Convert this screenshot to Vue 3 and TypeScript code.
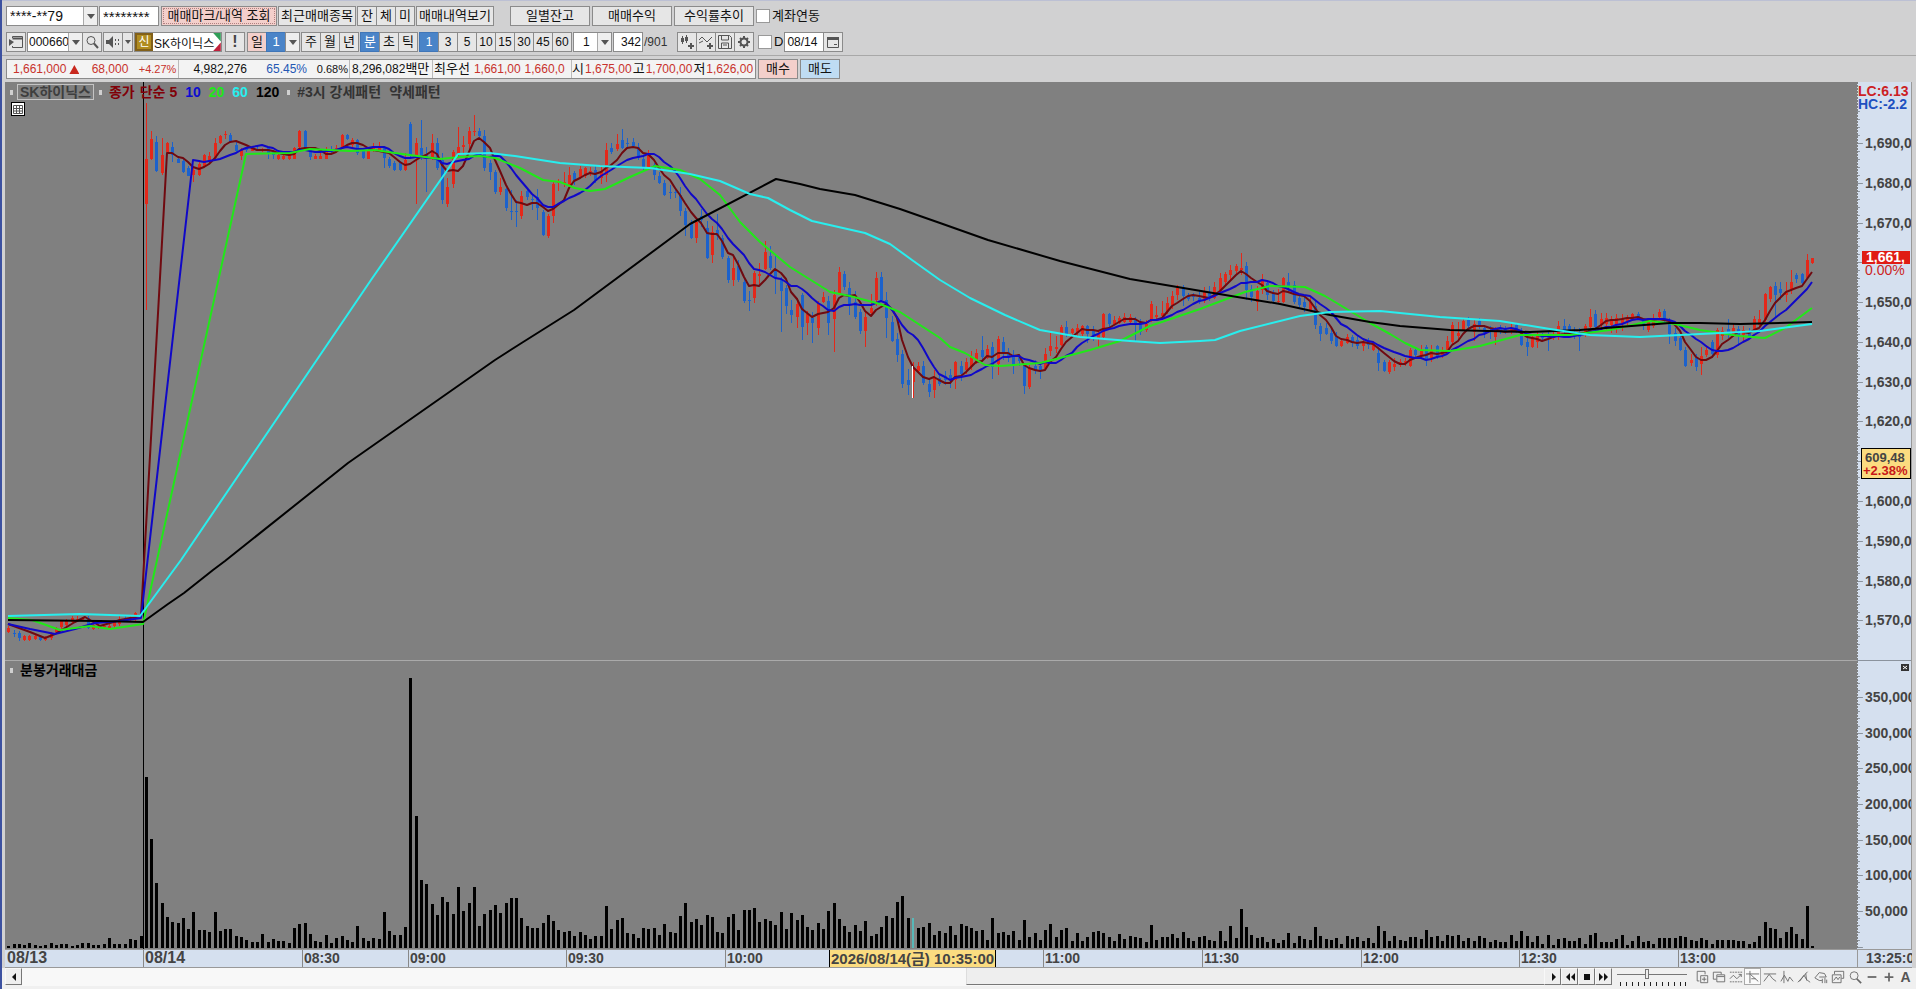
<script setup lang="ts">
import { computed, ref } from 'vue'

type Point = [number, number]
interface Candle {
  up: boolean
  high: number
  top: number
  bottom: number
  low: number
}

// Plot space shared by both panes
const LEFT = 5
const TOP = 82
const WIDTH = 1852
const HEIGHT = 867
const BASE = 948
const FIRST_BAR = 8.3
const BAR_STEP = 5.29
const OPEN_INDEX = 26
const CURSOR_INDEX = 171

const barX = (index: number): number => Math.round(FIRST_BAR + BAR_STEP * index)

// direction, high, body top, body bottom, low
const candleSource = `
r626,628,632,633 b630,633,634,637 b631,633,638,641 r635,636,640,641 r635,636,640,641 r634,636,639,640 b635,637,640,641 r636,638,640,641 r632,634,638,640 r627,629,632,634
r620,621,627,630 r619,620,625,627 r616,618,622,623 r616,619,620,622 r617,618,620,621 b616,618,628,629 r624,625,629,630 r624,626,628,629 r624,626,627,628 r623,626,628,629
r620,622,626,628 r616,619,624,626 b616,618,620,621 r616,617,620,621 r612,613,619,621 r607,612,614,616
r103,159,204,310 r131,139,159,160 b136,142,171,172 r138,155,173,175
r142,143,152,153 b142,147,155,162 b157,159,163,163 b158,161,172,173 b166,168,176,176 r166,170,175,182 r160,164,175,176 r154,155,167,168 r152,156,162,163 r138,143,158,159
r135,136,143,144 r131,134,135,139 b133,135,142,143 b142,145,151,152 r148,150,156,160 b147,148,150,152 r147,149,151,151 b146,149,150,151 r148,149,151,152 b147,148,154,159
b150,152,155,159 r151,155,159,160 r152,156,159,160 r152,155,159,160 r147,148,159,159 r130,131,147,148 b130,131,149,150 b149,150,157,160 r154,156,159,159 r153,156,159,159
r147,150,159,159 b146,150,152,153 r145,148,152,153 r134,135,147,148 b134,135,139,140 r138,140,145,147 b139,140,153,155 b149,151,158,159 r147,150,159,159 r143,147,151,152
r142,146,150,151 b147,148,158,168 b157,159,166,168 b161,163,170,171 b161,163,170,171 r153,160,170,171 b122,124,156,159 r138,143,158,204 b120,148,158,160 b147,155,157,192
r134,143,158,160 b138,143,168,170 b153,160,200,204 r178,187,204,207 r150,152,184,188 r127,147,155,158 r136,145,147,153 r127,131,144,150 r115,131,132,136 b128,131,136,137
b130,136,168,171 b160,163,172,180 b170,172,192,194 r178,187,192,195 b188,189,208,211 b190,211,212,220 b200,211,212,227 r191,196,216,219 b189,191,197,200 b194,199,200,210
b189,197,208,220 b210,212,235,236 r214,216,236,238 r182,184,216,223 r179,182,183,191 r172,182,183,187 r167,175,185,189 b171,173,180,185 r166,169,178,179 r167,168,176,178
r167,171,172,176 b166,170,180,183 r167,172,178,184 r143,150,175,182 b143,148,152,154 r134,144,149,151 b129,140,148,149 b138,143,144,148 b138,142,146,148 b143,147,158,160
b156,159,167,172 r150,155,167,168 b163,165,175,180 b172,176,183,184 b180,183,195,196 b185,192,193,199 b187,192,193,198 b187,195,211,216 b208,211,225,236 b220,224,238,239
r217,222,238,243 b209,216,220,227 b221,228,258,259 r226,232,255,263 b214,230,236,240 b235,238,257,259 b256,258,280,283 r255,268,280,286 b260,266,280,282 b278,282,301,303
b291,300,301,311 r271,273,298,303 r263,274,276,284 r241,252,269,270 b246,256,268,270 b254,270,278,294 b277,280,291,332 b285,288,306,314 b300,310,315,323 r298,304,317,328
b293,295,327,340 r311,314,323,335 b312,318,323,343 r301,303,328,335 r292,297,302,303 b296,301,323,335 r290,295,319,352 r267,272,294,295 b271,274,287,290 b282,288,305,315
b291,302,317,319 b309,312,331,334 r312,317,331,347 r294,308,313,314 r272,278,300,306 b272,277,300,302 b292,300,318,338 b316,322,341,342 b333,339,355,362 b350,354,384,388
b369,380,385,395 r362,368,382,398 r362,366,371,372 b361,366,383,385 b379,384,392,397 r370,377,390,398 b375,378,384,386 b371,376,380,385 b369,375,380,388 r361,362,380,389
b361,366,374,381 r358,362,370,374 r351,357,367,370 r349,353,362,364 b336,350,357,360 r345,349,358,359 b342,347,367,379 r336,339,364,375 b337,342,352,360 b348,352,358,362
b350,357,366,374 b354,357,361,366 b363,366,386,394 r365,368,387,389 b360,366,370,374 b362,366,370,379 r348,354,369,370 r333,346,351,356 r336,347,349,353 r325,327,345,346
b321,327,335,337 r328,329,333,335 r324,328,333,336 r325,326,334,336 b325,326,334,343 b326,330,335,341 r331,334,338,347 r313,314,337,338 b313,314,324,329 r316,320,324,325
r316,318,323,324 r313,317,322,323 r314,317,322,324 b317,320,325,341 b319,322,332,335 r320,324,330,332 r301,304,321,322 r306,315,317,319 r301,313,316,318 r297,303,312,314
r291,296,305,309 r285,288,295,300 b285,287,296,306 b293,296,299,301 b293,295,297,301 b291,298,302,304 r287,292,301,303 b286,293,298,301 r282,287,298,299 r273,278,291,292
r272,274,282,285 r265,270,275,280 r264,266,271,275 r253,268,270,275 b262,266,290,300 b285,289,297,302 r286,291,302,311 r274,281,290,294 b280,283,295,300 b290,293,301,304
r289,301,302,304 r277,278,302,303 b273,282,287,291 b281,285,302,304 b295,298,305,309 b297,302,307,312 r296,302,310,312 b301,306,325,329 b323,326,334,341 b323,328,334,335
b327,333,341,344 b332,337,346,347 r339,341,346,347 r334,337,343,344 b335,337,343,347 b335,340,346,349 r339,342,346,351 b338,341,345,349 r341,345,350,351 b347,353,363,371
b360,362,371,372 r360,362,372,374 r358,364,367,371 r359,362,365,367 r358,361,363,366 r348,350,366,367 b348,350,355,359 r345,350,355,358 b345,347,360,366 r345,350,358,362
b345,346,357,359 r347,350,355,358 r336,341,352,354 r322,325,342,345 r322,333,336,341 r319,321,330,331 b317,320,326,328 r320,324,332,341 b318,321,327,329 b325,328,333,338
b326,330,332,339 r327,330,337,345 b325,329,331,334 b326,329,332,334 r324,328,331,334 b324,325,331,333 b328,331,345,346 b335,342,347,356 r335,337,347,348 r332,336,342,348
b333,336,338,341 b332,336,338,351 r332,335,338,340 r321,326,334,340 b319,326,332,334 b324,326,335,337 b327,333,336,339 b328,333,337,351 r324,326,335,337 r309,317,327,328
b310,314,327,329 r313,319,325,330 r313,318,324,331 r316,320,325,333 r314,318,325,333 r314,318,324,331 r315,318,321,325 r313,314,319,321 b312,314,319,320 b318,321,326,330
r319,322,330,332 r314,318,326,328 r309,312,317,320 b309,311,320,322 b318,320,334,344 b328,333,341,346 b336,338,350,351 b347,350,366,367 r354,360,363,366 b354,358,367,371
r347,356,364,375 r345,350,355,357 b340,342,354,358 r328,330,355,358 r327,331,336,340 b319,329,335,338 r323,328,335,337 b326,329,336,346 r326,330,335,341 b328,332,336,339
r316,319,331,332 r310,319,325,327 r293,294,320,322 r286,287,299,302 b282,286,295,318 b282,289,293,300 r282,293,295,302 r270,282,289,294 b273,275,279,283 b273,274,283,285
r254,260,278,279 r258,258,263,264`

const candles: Candle[] = candleSource.trim().split(/\s+/).map((item) => {
  const [high, top, bottom, low] = item.slice(1).split(',').map(Number)
  return { up: item[0] === 'r', high, top, bottom, low }
})

const volumes: number[] = [
  2, 4, 4, 3, 5, 3, 2, 3, 5, 3, 4, 4, 2, 3, 5, 5, 3, 3, 4, 10, 4, 4, 4, 9, 8, 12,
  171, 109, 65, 45, 31, 26, 25, 30, 19, 36, 18, 18, 16, 36, 17, 19, 19, 12, 11, 8, 6, 6, 14, 6, 9, 7, 7, 5, 20, 24,
  25, 14, 7, 6, 13, 5, 10, 12, 8, 6, 22, 10, 7, 10, 9, 36, 17, 13, 13, 21,
  270, 132, 68, 64, 44, 33, 51, 46, 34, 61, 37, 45, 61, 22, 34, 38, 43, 35, 45, 50, 50, 30, 22, 20, 20, 25, 33, 27, 18, 16,
  17, 12, 16, 13, 9, 12, 12, 42, 19, 28, 30, 15, 14, 10, 20, 19, 20, 13, 24, 16, 15, 32, 45, 26, 29, 23, 33, 31, 16, 15,
  31, 34, 18, 38, 38, 40, 26, 29, 27, 23, 36, 19, 35, 28, 33, 21, 18, 25, 19, 37, 45, 29, 22, 16, 23, 17, 27, 12, 14, 21,
  32, 30, 46, 52, 30, 30, 20, 21, 25, 13, 17, 15, 22, 13, 24, 22, 20, 17, 18, 8, 30, 15, 16, 13, 17, 8, 28, 11, 15, 8,
  18, 24, 11, 18, 20, 7, 15, 7, 11, 16, 17, 15, 11, 7, 14, 9, 12, 11, 10, 6, 23, 8, 11, 11, 14, 10, 16, 10, 7, 11,
  12, 8, 7, 17, 7, 22, 10, 39, 21, 13, 10, 11, 6, 9, 5, 8, 15, 5, 12, 9, 8, 21, 12, 9, 8, 10, 4, 12, 9, 11,
  7, 10, 5, 22, 17, 7, 12, 8, 7, 11, 11, 9, 18, 11, 12, 7, 13, 12, 13, 7, 10, 7, 12, 10, 6, 8, 6, 6, 13, 7,
  17, 12, 6, 12, 4, 13, 3, 9, 10, 7, 7, 10, 4, 13, 15, 6, 6, 6, 9, 13, 3, 7, 12, 6, 7, 4, 10, 10, 10, 10,
  12, 11, 8, 7, 10, 8, 4, 8, 8, 8, 8, 7, 7, 4, 6, 12, 26, 20, 19, 10, 16, 21, 14, 9, 42, 2,
]

const closeOf = (c: Candle): number => (c.up ? c.top : c.bottom)

// Average of the closes, starting once the session holds a full window
function average(period: number): Point[] {
  const points: Point[] = []
  for (let i = OPEN_INDEX + period - 1; i < candles.length; i++) {
    let sum = 0
    for (let j = i - period + 1; j <= i; j++) sum += closeOf(candles[j])
    points.push([barX(i), Math.round(sum / period)])
  }
  return points
}

const toLine = (points: Point[]): string => points.map((p) => p.join(',')).join(' ')

const averages = computed(() => [
  {
    name: 'ma5',
    line: toLine([[8, 624], [30, 632], [45, 638], [55, 634], [75, 622], [85, 617], [100, 626], [120, 620], [141, 616], ...average(5)]),
  },
  {
    name: 'ma10',
    line: toLine([[8, 624], [30, 629], [55, 634], [75, 629], [95, 623], [120, 621], [141, 618], ...average(10)]),
  },
  {
    name: 'ma20',
    line: toLine([
      [8, 618], [32, 620], [60, 630], [90, 626], [110, 629], [143, 624], [246, 154], [290, 153], [310, 149], [350, 151],
      [375, 150], [395, 153], [440, 159], [460, 157], [480, 156], [495, 158], [520, 168], [543, 180], [560, 182], [575, 188],
      [590, 191], [605, 189], [630, 177], [655, 166], [680, 170], [700, 179], [720, 195], [740, 222], [760, 242], [790, 267],
      [830, 292], [850, 296], [880, 304], [900, 312], [940, 338], [950, 347], [965, 353], [985, 365], [1000, 366], [1040, 363],
      [1060, 358], [1090, 350], [1120, 341], [1150, 326], [1200, 309], [1245, 292], [1270, 286], [1305, 287], [1325, 296],
      [1350, 311], [1370, 323], [1390, 334], [1405, 343], [1420, 350], [1450, 351], [1480, 346], [1520, 335], [1570, 335],
      [1610, 330], [1650, 321], [1675, 324], [1700, 330], [1740, 336], [1765, 338], [1785, 328], [1812, 308],
    ]),
  },
  {
    name: 'ma120',
    line: toLine([
      [8, 620], [100, 621], [143, 622], [168, 604], [184, 593], [213, 570], [225, 561], [348, 463], [495, 360], [520, 344],
      [574, 310], [690, 224], [776, 179], [800, 184], [820, 189], [855, 195], [900, 209], [940, 223], [988, 240], [1060, 261],
      [1130, 279], [1207, 292], [1280, 304], [1330, 315], [1370, 322], [1400, 326], [1450, 330], [1530, 332], [1580, 330],
      [1670, 323], [1700, 323], [1740, 324], [1812, 322],
    ]),
  },
  {
    name: 'ma60',
    line: toLine([
      [8, 616], [80, 614], [140, 616], [181, 560], [371, 280], [446, 172], [458, 154], [490, 153], [515, 156], [560, 163],
      [600, 166], [650, 168], [690, 174], [720, 181], [750, 194], [768, 198], [790, 210], [812, 221], [865, 233], [890, 244],
      [912, 260], [940, 280], [970, 298], [1005, 315], [1040, 330], [1080, 337], [1130, 341], [1160, 343], [1200, 341],
      [1215, 340], [1240, 331], [1300, 316], [1330, 312], [1380, 311], [1440, 317], [1500, 321], [1550, 329], [1590, 335],
      [1640, 337], [1700, 334], [1760, 331], [1812, 324],
    ]),
  },
])

const percentY = (y: number): string => `${((y - TOP) / HEIGHT) * 100}%`
const percentX = (x: number): string => `${((x - LEFT) / WIDTH) * 100}%`

const PRICE_STEP = 39.78
const VOLUME_STEP = 35.67
const priceLabels = Array.from({ length: 13 }, (_, i) => ({ text: `1,${690 - i * 10},0`, y: 143 + i * PRICE_STEP }))
  .filter((_, i) => i !== 3 && i !== 8)
const volumeLabels = Array.from({ length: 7 }, (_, i) => ({ text: `${350 - i * 50},000`, y: 697 + i * VOLUME_STEP }))

const ticks: { y: number; major: boolean }[] = []
for (let i = -4; i < 64; i++) ticks.push({ y: Math.round(143 + (i * PRICE_STEP) / 5) + 0.5, major: i % 5 === 0 })
for (let i = -3; i <= 35; i++) ticks.push({ y: Math.round(697 + (i * VOLUME_STEP) / 5) + 0.5, major: i % 5 === 0 })

const times = [
  { text: '08/13', x: 6, day: true },
  { text: '08/14', x: 143, day: true },
  { text: '08:30', x: 302, day: false },
  { text: '09:00', x: 408, day: false },
  { text: '09:30', x: 566, day: false },
  { text: '10:00', x: 725, day: false },
  { text: '11:00', x: 1043, day: false },
  { text: '11:30', x: 1202, day: false },
  { text: '12:00', x: 1361, day: false },
  { text: '12:30', x: 1519, day: false },
  { text: '13:00', x: 1678, day: false },
]

const minuteUnits = ['1', '3', '5', '10', '15', '30', '45', '60']
const periods = ['주', '월', '년']
const units = ['분', '초', '틱']
const minute = ref('1')
const unit = ref('분')
const barCount = ref('342')
const date = ref('08/14')
const speed = ref(42)
</script>

<template>
  <main class="window">
    <header class="toolbar">
      <div class="row">
        <span class="combo account">
          <select aria-label="계좌번호"><option>****-**79</option></select>
          <i class="drop" aria-hidden="true"></i>
        </span>
        <input class="field password" type="text" value="********" aria-label="비밀번호" />
        <button class="btn pink marked w116">매매마크/내역 조회</button>
        <button class="btn w78">최근매매종목</button>
        <span class="joined small">
          <button class="btn">잔</button><button class="btn">체</button><button class="btn">미</button>
        </span>
        <button class="btn w78">매매내역보기</button>
        <button class="btn w80 spaced">일별잔고</button>
        <button class="btn w80 apart">매매수익</button>
        <button class="btn w80 apart">수익률추이</button>
        <label class="check"><input type="checkbox" />계좌연동</label>
      </div>

      <div class="row second">
        <button class="btn icon" aria-label="창 연결">
          <svg viewBox="0 0 16 16"><path d="M4.500 4V2.500h10v11h-10V12" /><path d="M4.500 4.500h10" stroke-width="2" /><path class="solid" d="M1 5l5 3-5 4z" /></svg>
        </button>
        <span class="joined">
          <span class="combo code">
            <select aria-label="종목코드"><option>000660</option></select>
            <i class="drop" aria-hidden="true"></i>
          </span>
          <button class="btn icon" aria-label="종목 검색">
            <svg viewBox="0 0 16 16"><circle cx="7" cy="6.500" r="4" /><path d="M10 9.500l4 4.500" stroke-width="2" /></svg>
          </button>
        </span>
        <span class="joined">
          <button class="btn icon" aria-label="소리">
            <svg viewBox="0 0 16 16"><path class="solid" d="M1 6h3l4-4v12l-4-4H1z" /><path d="M10.500 5v6M13.500 5v6" stroke-dasharray="2 2" /></svg>
          </button>
          <button class="btn narrow" aria-label="소리 메뉴"><i class="arrow"></i></button>
        </span>
        <span class="stock">
          <b>신</b><span>SK하이닉스</span>
          <svg viewBox="0 0 8 19" aria-hidden="true"><path d="M0 0h8v9z" fill="#2f9e57" /><path d="M8 10v9H0z" fill="#c0203c" /></svg>
        </span>
        <button class="btn icon bang">!</button>
        <span class="joined day">
          <button class="btn pink">일</button><button class="btn on">1</button>
          <button class="btn arrowed" aria-label="일 단위"><i class="arrow"></i></button>
        </span>
        <span class="joined small">
          <button v-for="p in periods" :key="p" class="btn">{{ p }}</button>
        </span>
        <span class="joined small">
          <button v-for="u in units" :key="u" class="btn" :class="{ on: u === unit }" @click="unit = u">{{ u }}</button>
        </span>
        <span class="joined minutes">
          <button v-for="m in minuteUnits" :key="m" class="btn" :class="{ on: m === minute }" @click="minute = m">{{ m }}</button>
        </span>
        <span class="combo step">
          <select aria-label="간격"><option>1</option></select>
          <i class="drop" aria-hidden="true"></i>
        </span>
        <input v-model="barCount" class="field count" type="text" aria-label="봉 개수" />
        <span class="total">/901</span>
        <span class="joined tools">
          <button class="btn icon" aria-label="종목 추가">
            <svg viewBox="0 0 16 16"><path d="M3.500 2v8M7.500 1v8" /><path class="solid" d="M2 4h3v4H2zM6 3h3v4H6z" /><path d="M9 12h6M12 9v6" stroke-width="2" /></svg>
          </button>
          <button class="btn icon" aria-label="지표 추가">
            <svg viewBox="0 0 16 16"><path d="M1 6l3-3 5 5 5-5M1 9l4-2" /><path d="M9 12h6M12 9v6" stroke-width="2" /></svg>
          </button>
          <button class="btn icon" aria-label="저장">
            <svg viewBox="0 0 16 16"><path d="M1.500 1.500h11l2 2v11h-13zM4.500 2v4h7V2M4.500 14v-5h7v5M6 11h4" /></svg>
          </button>
          <button class="btn icon" aria-label="설정">
            <svg viewBox="0 0 16 16"><circle cx="8" cy="8" r="3.500" stroke-width="2" /><path d="M8 2v3M8 11v3M2 8h3M11 8h3M4 4l2 2M10 10l2 2M12 4l-2 2M6 10l-2 2" stroke-width="2" /></svg>
          </button>
        </span>
        <label class="check"><input type="checkbox" />D</label>
        <span class="joined">
          <input v-model="date" class="field date" type="text" aria-label="날짜" />
          <button class="btn icon" aria-label="달력">
            <svg viewBox="0 0 16 16"><path d="M2.500 4.500h11v9h-11z" /><path d="M2 4.500h12" stroke-width="3" /><path d="M9 10.500h3" /></svg>
          </button>
        </span>
      </div>

      <div class="row quote-row">
        <div class="quote">
          <div class="cell change up">
            <span>1,661,000</span><i class="rise" aria-hidden="true"></i><span class="diff">68,000</span><span class="rate">+4.27%</span>
          </div>
          <div class="cell trade"><span class="qty">4,982,276</span><span class="ratio">65.45%</span><span class="turn">0.68%</span></div>
          <div class="cell amount">8,296,082<em>백만</em></div>
          <div class="cell best"><em>최우선</em><span class="up">1,661,00</span><span class="up">1,660,0</span></div>
          <div class="cell range">
            <em>시</em><span class="up">1,675,00</span><em>고</em><span class="up">1,700,00</span><em>저</em><span class="up">1,626,00</span>
          </div>
        </div>
        <button class="btn pink trade-btn">매수</button>
        <button class="btn blue trade-btn">매도</button>
      </div>
    </header>

    <section class="chart">
      <div class="plot">
        <svg class="canvas" :viewBox="`${LEFT} ${TOP} ${WIDTH} ${HEIGHT}`" preserveAspectRatio="none" role="img" aria-label="SK하이닉스 분봉 차트">
          <path class="divider" d="M5 660.500H1857" />
          <path class="session" d="M143.500 82V949" />
          <rect v-for="(v, i) in volumes" :key="'v' + i" :class="i === CURSOR_INDEX ? 'cursor-volume' : 'volume'" :x="barX(i) - 1" :y="BASE - v" :width="i === CURSOR_INDEX ? 2 : 3" :height="v" />
          <g v-for="(c, i) in candles" :key="'c' + i" :class="c.up ? 'rising' : 'falling'">
            <rect :x="barX(i)" :y="c.high" width="1" :height="c.low - c.high" />
            <rect :x="barX(i) - 1" :y="c.top" width="3" :height="c.bottom - c.top" />
          </g>
          <polyline v-for="a in averages" :key="a.name" class="average" :class="a.name" :points="a.line" />
          <path class="cursor" d="M912.500 366V398" />
        </svg>
        <div class="legend">
          <i class="dot"></i><span class="name">SK하이닉스</span><i class="dot"></i>
          <span class="l5">종가</span><span class="l5">단순 5</span><span class="l10">10</span><span class="l20">20</span><span class="l60">60</span><span class="l120">120</span>
          <i class="dot"></i><span class="pattern">#3시 강세패턴</span><span class="pattern">약세패턴</span>
        </div>
        <button class="grid-btn" aria-label="데이터 표">
          <svg viewBox="0 0 12 12"><path d="M1.500 2.500h9v8h-9zM1.500 5.500h9M1.500 8h9M4.500 2.500v8M7.500 2.500v8" /></svg>
        </button>
        <div class="legend lower" :style="{ top: percentY(662) }"><i class="dot"></i><span class="volume-name">분봉거래대금</span></div>
      </div>

      <div class="scale">
        <svg class="canvas" :viewBox="`0 ${TOP} 55 ${HEIGHT}`" preserveAspectRatio="none" aria-hidden="true">
          <path v-for="(t, i) in ticks" :key="i" class="tick" :d="`M0 ${t.y}H${t.major ? 6 : 3}`" />
          <path class="tick" d="M0 660.500H55" />
          <path class="edge" d="M0.500 82V949" />
        </svg>
        <div class="limits"><span class="lc">LC:6.13</span><span class="hc">HC:-2.2</span></div>
        <span v-for="l in priceLabels" :key="l.text" class="mark" :style="{ top: percentY(l.y) }">{{ l.text }}</span>
        <span v-for="l in volumeLabels" :key="l.text" class="mark" :style="{ top: percentY(l.y) }">{{ l.text }}</span>
        <div class="current" :style="{ top: percentY(251) }"><span>1,661,</span><b>0.00%</b></div>
        <div class="pointer" :style="{ top: percentY(448) }"><span>609,48</span><b>+2.38%</b></div>
        <button class="close" :style="{ top: percentY(664) }" aria-label="지표 닫기">
          <svg viewBox="0 0 8 7"><path d="M2 2l4 3M6 2L2 5" /></svg>
        </button>
      </div>

      <div class="timeline">
        <span v-for="t in times" :key="t.text" class="time" :class="{ day: t.day }" :style="{ left: percentX(t.x) }">{{ t.text }}</span>
        <span class="stamp" :style="{ left: percentX(829) }">2026/08/14(금) 10:35:00</span>
      </div>
      <div class="timeline last"><span>13:25:0</span></div>
    </section>

    <footer class="bottom">
      <div class="scroller">
        <button class="key" aria-label="왼쪽으로"><svg viewBox="0 0 12 12"><path class="solid" d="M8 2v8L4 6z" /></svg></button>
        <div class="track"><div class="thumb"></div></div>
      </div>
      <div class="player">
        <button class="key" aria-label="재생"><svg viewBox="0 0 12 12"><path class="solid" d="M5 2l4 4-4 4z" /></svg></button>
        <button class="key" aria-label="뒤로"><svg viewBox="0 0 12 12"><path class="solid" d="M6 2v8L2 6zM11 2v8L7 6z" /></svg></button>
        <button class="key" aria-label="정지"><svg viewBox="0 0 12 12"><path class="solid" d="M3 3h6v6H3z" /></svg></button>
        <button class="key" aria-label="앞으로"><svg viewBox="0 0 12 12"><path class="solid" d="M1 2v8l4-4zM6 2v8l4-4z" /></svg></button>
      </div>
      <label class="speed">
        <input v-model="speed" type="range" min="0" max="100" aria-label="재생 속도" />
        <svg viewBox="0 0 70 4" aria-hidden="true"><path d="M3.500 0v4M9.500 0v4M15.500 0v4M21.500 0v4M27.500 0v4M33.500 0v4M39.500 0v4M45.500 0v4M51.500 0v4M57.500 0v4M63.500 0v4M68.500 0v4" /></svg>
      </label>
      <div class="draw">
        <button aria-label="창 추가"><svg viewBox="0 0 16 16"><path d="M5 12.500H2.500v-11h9V5M6.500 6.500h8v8h-8zM8 10.500h5M10.500 8v5" /></svg></button>
        <button aria-label="창 복사"><svg viewBox="0 0 16 16"><path d="M5 10.500H1.500v-8h9V5M5.500 5.500h9v8h-9zM6 7.500h8" /></svg></button>
        <button aria-label="구간"><svg viewBox="0 0 16 16"><path d="M1 2.500h14M1 13.500h14" stroke-dasharray="2 1" /><path d="M1 10l4-4 4 4 5-5M11 5h3v3" /></svg></button>
        <button class="active" aria-label="추세"><svg viewBox="0 0 16 16"><path d="M0 4.500h15M4.500 1v14M5 5l9 8M6 10h5" /></svg></button>
        <button aria-label="수평선"><svg viewBox="0 0 16 16"><path d="M1 4.500h14M1 13l6-8 4 5 4 3" /></svg></button>
        <button aria-label="수직선"><svg viewBox="0 0 16 16"><path d="M4.500 1v14M1 13l4-7 4 7 2-5 4 5" /></svg></button>
        <button aria-label="선 긋기"><svg viewBox="0 0 16 16"><path d="M1 14L12 2M3 13l5-7 3 5 4 3M10 4l1 8" /></svg></button>
        <button aria-label="도형"><svg viewBox="0 0 16 16"><path d="M1 9l5-6 6 1 2 4M1 9l5 3h3M6 8h8M9.500 10v5M12.500 9v6M14.500 11v4" /></svg></button>
        <button aria-label="겹치기"><svg viewBox="0 0 16 16"><path d="M4 4.500V1.500h10.500v8H12M1.500 5.500h10v9h-10zM3 12l3-4 2 3 2-3" /></svg></button>
        <button aria-label="확대경"><svg viewBox="0 0 16 16"><circle cx="7" cy="6.500" r="4.500" /><path d="M10 10l5 5" stroke-width="2" /></svg></button>
        <button aria-label="축소"><svg viewBox="0 0 16 16"><path d="M3 8h10" stroke-width="2" /></svg></button>
        <button aria-label="확대"><svg viewBox="0 0 16 16"><path d="M3 8h10M8 3v10" stroke-width="2" /></svg></button>
        <button class="auto">A</button>
      </div>
    </footer>
  </main>
</template>

<style>
body {
  margin: 0;
  overflow: hidden;
}
</style>

<style scoped>
* {
  box-sizing: border-box;
}

.window {
  display: flex;
  flex-direction: column;
  height: 100vh;
  border-left: 2px solid #3c51a0;
  background: #d1d1d2;
  color: #111;
  font-family: 'Liberation Sans', 'Noto Sans CJK KR', sans-serif;
  font-size: 12px;
}

button,
input,
select {
  margin: 0;
  padding: 0;
  border-radius: 0;
  color: inherit;
  font: inherit;
}

svg {
  fill: none;
  stroke: #555;
}

.solid {
  fill: #111;
  stroke: none;
}

.toolbar {
  padding: 5px 0 3px 4px;
  border-top: 1px solid #bcc0d4;
}

.toolbar .solid {
  fill: #555;
}

.row {
  display: flex;
  align-items: center;
  gap: 1px;
  height: 20px;
  margin-bottom: 6px;
  white-space: nowrap;
}

.row.second {
  margin-bottom: 3px;
}

.btn {
  display: inline-flex;
  align-items: center;
  justify-content: center;
  height: 20px;
  border: 1px solid #8b8b8b;
  background: #e6e6e6;
  font-size: 13px;
  line-height: 16px;
  white-space: nowrap;
}

.pink {
  background: #f3cfcb;
}

.marked {
  outline: 1px dotted #b08080;
  outline-offset: -3px;
}

.blue {
  background: #bfdcf3;
}

.btn.on {
  border-color: #4076b8;
  background: #4a84c8;
  color: #fff;
}

.w116 {
  width: 116px;
  margin-left: 1px;
}

.w78 {
  width: 78px;
}

.w80 {
  width: 80px;
}

.spaced {
  margin-left: 15px;
}

.apart {
  margin-left: 1px;
}

.joined {
  display: inline-flex;
}

.joined > * + * {
  margin-left: -1px;
}

.small .btn {
  width: 20px;
}

.minutes .btn {
  width: 20px;
  font-size: 12px;
}

.icon {
  width: 20px;
}

.icon svg {
  width: 16px;
  height: 16px;
}

.bang {
  margin: 0 1px 0 2px;
  color: #444;
  font-size: 16px;
  font-weight: bold;
}

.narrow {
  width: 11px;
}

.day .btn {
  width: 20px;
}

.day .btn.arrowed {
  width: 15px;
  background: #eee;
}

.arrow {
  border: 4px solid transparent;
  border-top: 5px solid #555;
  border-bottom: 0;
}

.narrow .arrow {
  border-width: 4px 3px 0;
}

.combo {
  position: relative;
  display: inline-flex;
  height: 20px;
}

.combo select {
  width: 100%;
  height: 20px;
  padding: 0 0 0 3px;
  border: 1px solid #8b8b8b;
  background: #fff;
  appearance: none;
}

.drop {
  position: absolute;
  top: 1px;
  right: 1px;
  width: 14px;
  height: 18px;
  border-left: 1px solid #aaa;
  background: #efefef;
  pointer-events: none;
}

.drop::after {
  content: '';
  position: absolute;
  top: 7px;
  left: 3px;
  border: 4px solid transparent;
  border-top: 5px solid #555;
  border-bottom: 0;
}

.account {
  width: 92px;
}

.account select {
  font-size: 14px;
}

.code {
  width: 56px;
}

.code select {
  padding-left: 1px;
}

.step {
  width: 39px;
}

.step select {
  padding-left: 9px;
}

.field {
  height: 20px;
  padding: 0 3px;
  border: 1px solid #8b8b8b;
  background: #fff;
}

.password {
  width: 60px;
  font-size: 15px;
}

.count {
  width: 30px;
  padding: 0 1px;
  text-align: right;
}

.date {
  width: 40px;
  padding: 0 2px;
}

.total {
  width: 32px;
  color: #333;
}

.tools {
  margin-right: 2px;
}

.check {
  display: inline-flex;
  align-items: center;
  gap: 2px;
  height: 18px;
  margin-left: 1px;
  font-size: 13px;
  line-height: 16px;
}

.check input {
  width: 14px;
  height: 14px;
  border: 1px solid #999;
  background: #fff;
  appearance: none;
}

.stock {
  position: relative;
  display: inline-flex;
  align-items: center;
  width: 88px;
  height: 20px;
  border: 1px solid #8b8b8b;
  background: #fff;
}

.stock b {
  flex: none;
  width: 18px;
  height: 18px;
  margin-right: 1px;
  border: 2px solid #82601a;
  background: #b08c20;
  color: #fff;
  font-weight: normal;
  line-height: 14px;
  text-align: center;
}

.stock svg {
  position: absolute;
  top: 0;
  right: 0;
  width: 8px;
  height: 18px;
  stroke: none;
}

.quote-row {
  gap: 2px;
  height: 24px;
  margin: 0 0 0 -4px;
  padding: 3px 0 0 4px;
  border-top: 1px solid #a8a8a8;
}

.quote {
  display: flex;
  width: 750px;
  height: 20px;
  border: 1px solid #8b8b8b;
  background: #f3f3f3;
  line-height: 18px;
}

.quote em {
  font-size: 13px;
  font-style: normal;
}

.cell {
  display: flex;
  flex: none;
  overflow: hidden;
  border-right: 1px solid #bbb;
}

.up {
  color: #c8322c;
}

.change {
  width: 172px;
  padding-left: 6px;
}

.rise {
  width: 10px;
  height: 9px;
  margin: 5px 0 0 3px;
  background: #c8281e;
  clip-path: polygon(50% 0, 100% 100%, 0 100%);
}

.diff {
  width: 49px;
  text-align: right;
}

.rate {
  width: 48px;
  font-size: 11px;
  text-align: right;
}

.trade {
  width: 171px;
}

.qty {
  width: 68px;
  text-align: right;
}

.ratio {
  width: 60px;
  color: #2457b4;
  text-align: right;
}

.turn {
  width: 41px;
  font-size: 11px;
  text-align: right;
}

.amount {
  width: 83px;
  padding-left: 2px;
}

.best {
  gap: 4px;
  width: 139px;
  padding-left: 1px;
}

.range {
  flex: 1;
  gap: 1px;
  border: 0;
}

.trade-btn {
  width: 40px;
}

.chart {
  display: grid;
  flex: 1;
  grid-template: minmax(0, 1fr) 19px / minmax(0, 1fr) 55px;
  min-height: 0;
  margin: 0 4px 0 3px;
}

.plot {
  position: relative;
  overflow: hidden;
  background: #808080;
}

.canvas {
  display: block;
  width: 100%;
  height: 100%;
}

.divider {
  stroke: #aaa;
}

.session {
  stroke: #000;
}

.volume {
  fill: #000;
  stroke: none;
}

.cursor-volume {
  fill: #58b8b8;
  stroke: none;
}

.rising {
  fill: #e4281a;
  stroke: none;
}

.falling {
  fill: #1c62cc;
  stroke: none;
}

.average {
  stroke-width: 2;
  stroke-linejoin: round;
}

.ma5 {
  stroke: #700a10;
}

.ma10 {
  stroke: #1008c8;
}

.ma20 {
  stroke: #20e818;
}

.ma60 {
  stroke: #28eeee;
}

.ma120 {
  stroke: #000;
}

.cursor {
  stroke: #fff;
}

.legend {
  position: absolute;
  top: 2px;
  left: 5px;
  display: flex;
  align-items: center;
  gap: 8px;
  height: 16px;
  font-size: 14px;
  font-weight: bold;
  line-height: 16px;
  white-space: nowrap;
}

.dot {
  width: 3px;
  height: 5px;
  margin-right: -1px;
  background: #d0d0d0;
}

.legend .name {
  height: 16px;
  margin: 0 -3px;
  padding: 0 2px;
  border: 1px solid #c4c4c4;
  color: #3e3e3e;
  line-height: 14px;
}

.l5 {
  color: #800008;
}

.l5 + .l5 {
  margin-left: -3px;
}

.l10 {
  color: #0c0cd0;
}

.l20 {
  color: #20e818;
}

.l60 {
  color: #28eeee;
}

.l120 {
  color: #000;
}

.pattern {
  color: #333;
}

.volume-name {
  color: #000;
}

.grid-btn {
  position: absolute;
  top: 20px;
  left: 6px;
  display: flex;
  width: 14px;
  height: 14px;
  border: 1px solid #000;
  background: #fff;
}

.scale {
  position: relative;
  overflow: hidden;
  border-right: 1px solid #999;
  background: #d5e0ef;
  color: #444;
  font-size: 14px;
  font-weight: bold;
}

.scale .canvas {
  position: absolute;
  inset: 0;
}

.tick {
  stroke: #8a929c;
}

.edge {
  stroke: #7a7a7a;
  stroke-dasharray: 2 1;
}

.limits {
  position: absolute;
  top: 3px;
  left: 1px;
  display: flex;
  flex-direction: column;
  line-height: 13px;
}

.lc {
  color: #cc1f24;
}

.hc {
  color: #2050c0;
}

.mark {
  position: absolute;
  left: 8px;
  line-height: 16px;
  transform: translateY(-50%);
}

.current {
  position: absolute;
  left: 5px;
  display: flex;
  flex-direction: column;
  width: 48px;
  line-height: 13px;
}

.current span {
  padding-left: 4px;
  background: #e01c14;
  color: #fff;
}

.current b {
  padding-left: 3px;
  color: #cc1f24;
  font-weight: normal;
}

.pointer {
  position: absolute;
  left: 4px;
  display: flex;
  flex-direction: column;
  width: 50px;
  height: 31px;
  padding: 2px 0 0 1px;
  border: 1px solid #000;
  background: #fbdc80;
  line-height: 13px;
}

.pointer span {
  padding-left: 2px;
  font-size: 13px;
}

.pointer b {
  color: #c81818;
  font-size: 13px;
}

.close {
  position: absolute;
  right: 2px;
  display: flex;
  width: 8px;
  height: 7px;
  border: 0;
  background: #333;
}

.close svg {
  stroke: #fff;
}

.timeline {
  position: relative;
  overflow: hidden;
  border-top: 1px solid #999;
  border-bottom: 1px solid #999;
  background: #d5e0ef;
  color: #444;
  font-size: 14px;
  font-weight: bold;
  line-height: 16px;
}

.time {
  position: absolute;
  top: 0;
  height: 19px;
  padding-left: 1px;
  border-left: 1px solid #888;
}

.time.day {
  font-size: 16px;
}

.time:first-child {
  border: 0;
}

.stamp {
  position: absolute;
  top: -1px;
  height: 19px;
  padding: 0 1px;
  border: 1px solid #000;
  background: #fbdc80;
  font-size: 15px;
  line-height: 17px;
  white-space: nowrap;
}

.last {
  padding-left: 8px;
  border-left: 1px solid #999;
}

.bottom {
  display: flex;
  flex: none;
  height: 21px;
  padding: 0 2px 3px 3px;
  background: #f0f0f0;
}

.scroller {
  display: flex;
  flex: 1;
}

.track {
  flex: 1;
  background: #f8f8f8;
}

.thumb {
  width: 38%;
  height: 17px;
  margin-left: 62%;
  border-bottom: 1px solid #777;
  border-left: 1px solid #ddd;
  background: #eee;
}

.key {
  display: flex;
  align-items: center;
  justify-content: center;
  width: 17px;
  height: 17px;
  border: 1px solid #f8f8f8;
  border-right-color: #777;
  border-bottom-color: #777;
  background: #eee;
}

.key svg {
  flex: none;
  width: 12px;
  height: 12px;
}

.player {
  display: flex;
}

.speed {
  display: flex;
  flex-direction: column;
  width: 70px;
  margin: 0 6px 0 5px;
}

.speed input {
  width: 70px;
  height: 12px;
  background: linear-gradient(#777, #777) center / 100% 1px no-repeat;
  appearance: none;
}

.speed input::-webkit-slider-thumb {
  width: 4px;
  height: 10px;
  border: 1px solid #777;
  background: #eee;
  appearance: none;
}

.speed svg {
  width: 70px;
  height: 4px;
  margin-top: 2px;
  stroke: #222;
}

.draw {
  display: flex;
}

.draw button {
  display: flex;
  align-items: center;
  justify-content: center;
  width: 17px;
  height: 17px;
  border: 0;
  background: none;
}

.draw svg {
  flex: none;
  width: 14px;
  height: 14px;
  stroke: #666;
}

.draw .active {
  border: 1px solid #aaa;
  background: #fafafa;
}

.draw .auto {
  color: #555;
  font-size: 14px;
  font-weight: bold;
}
</style>
